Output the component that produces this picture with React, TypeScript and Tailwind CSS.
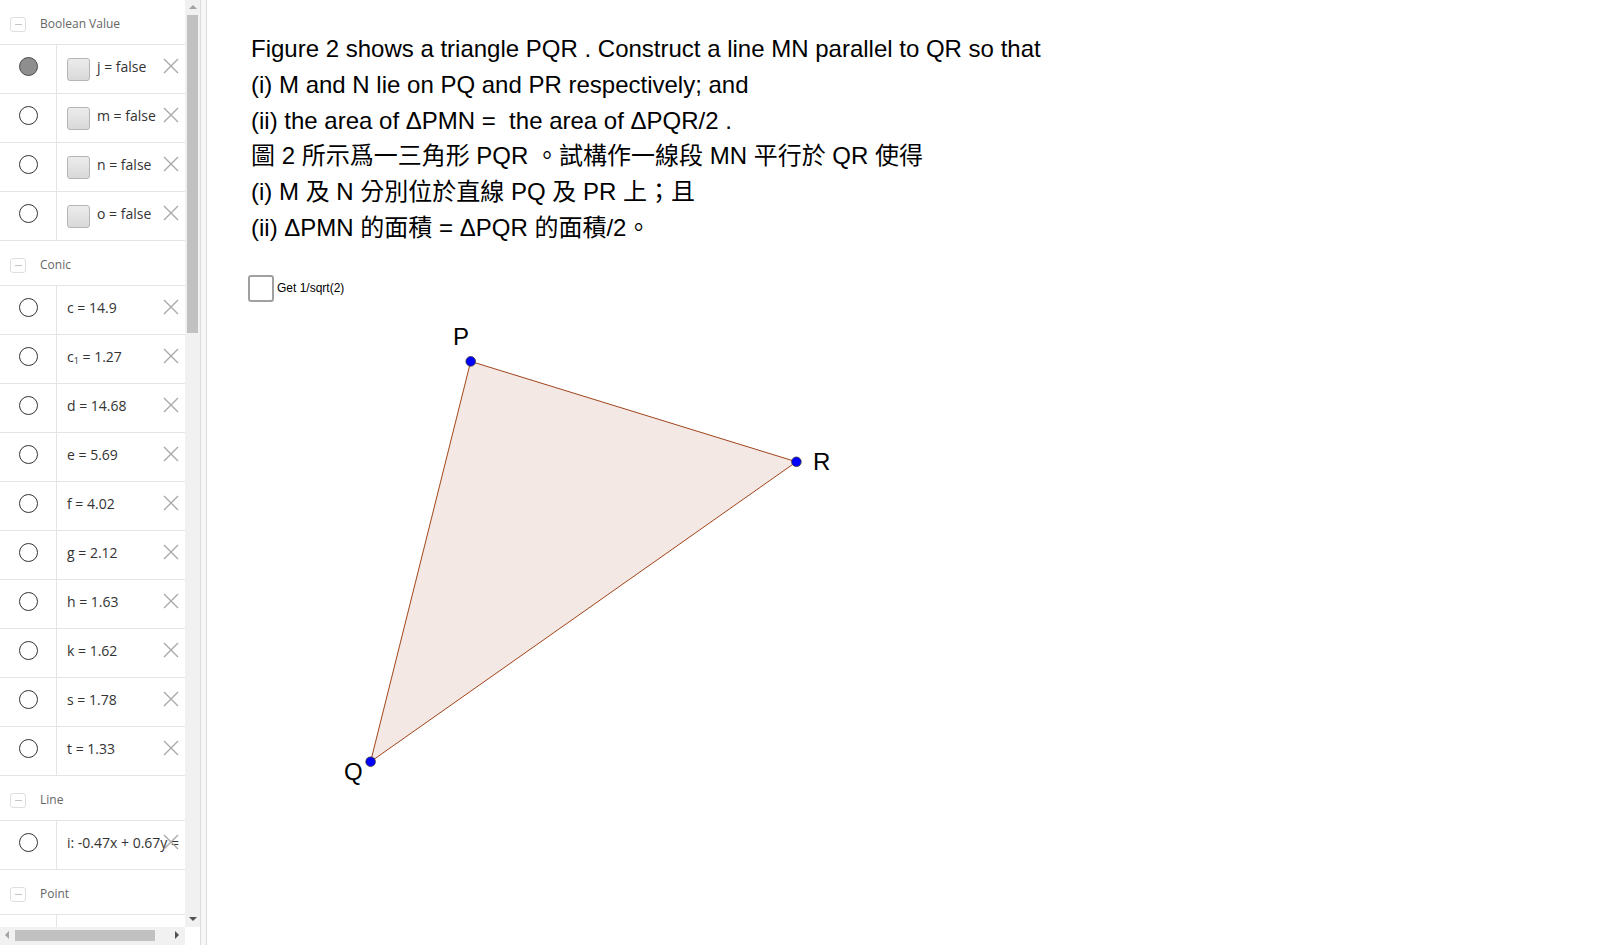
import type { ReactNode } from "react";

type Row = { label: ReactNode; bool?: boolean; filled?: boolean };

const sections: { title: string; rows: Row[] }[] = [
  {
    title: "Boolean Value",
    rows: [
      { label: "j = false", bool: true, filled: true },
      { label: "m = false", bool: true },
      { label: "n = false", bool: true },
      { label: "o = false", bool: true },
    ],
  },
  {
    title: "Conic",
    rows: [
      { label: "c = 14.9" },
      {
        label: (
          <>
            c<sub className="text-[9px]">1</sub> = 1.27
          </>
        ),
      },
      { label: "d = 14.68" },
      { label: "e = 5.69" },
      { label: "f = 4.02" },
      { label: "g = 2.12" },
      { label: "h = 1.63" },
      { label: "k = 1.62" },
      { label: "s = 1.78" },
      { label: "t = 1.33" },
    ],
  },
  { title: "Line", rows: [{ label: "i: -0.47x + 0.67y =" }] },
  { title: "Point", rows: [{ label: "" }] },
];

function DeleteIcon() {
  return (
    <svg width="16" height="16" viewBox="0 0 16 16" className="absolute right-[6px] top-[13px]">
      <path d="M1 1 L15 15 M15 1 L1 15" stroke="#a9a9a9" strokeWidth="1.4" fill="none" />
    </svg>
  );
}

function SectionHeader({ title }: { title: string }) {
  return (
    <div className="flex h-[45px] shrink-0 items-center border-b border-[#e4e4e4] pt-[4px]">
      <div className="ml-[10px] flex h-[15px] w-[16px] items-center justify-center rounded-[3px] border border-[#dedede]">
        <div className="h-px w-[7px] bg-[#c4c4c4]" />
      </div>
      <span className="ml-[14px] text-[12px] text-[#666]">{title}</span>
    </div>
  );
}

function ItemRow({ row }: { row: Row }) {
  return (
    <div className="flex h-[49px] shrink-0 border-b border-[#e4e4e4]">
      <div className="flex w-[57px] shrink-0 items-center justify-center border-r border-[#e4e4e4] pb-[5px]">
        <div className={`h-[19px] w-[19px] rounded-full border ${row.filled ? "border-[#4a4a4a] bg-[#8e8e8e]" : "border-[#333] bg-white"}`} />
      </div>
      <div className="relative flex min-w-0 flex-1 items-center overflow-hidden pb-[5px] pl-[10px]">
        {row.bool && (
          <div className="mr-[7px] mt-[5px] h-[23px] w-[23px] shrink-0 rounded-[3px] border border-[#b5b5b5] bg-gradient-to-b from-[#ececec] to-[#d9d9d9]" />
        )}
        <span className="whitespace-nowrap text-[14px] text-[#333]">{row.label}</span>
        <DeleteIcon />
      </div>
    </div>
  );
}

export default function App() {
  return (
    <div className="flex h-[945px] w-[1600px] overflow-hidden bg-white" style={{ fontFamily: '"Liberation Sans", Arial, sans-serif' }}>
      <div className="flex w-[200px] shrink-0 flex-col" style={{ fontFamily: '"Open Sans", sans-serif' }}>
        <div className="flex h-[927px]">
          <div className="flex w-[185px] flex-col overflow-hidden">
            {sections.map((section) => (
              <div key={section.title} className="flex flex-col">
                <SectionHeader title={section.title} />
                {section.rows.map((row, i) => (
                  <ItemRow key={i} row={row} />
                ))}
              </div>
            ))}
          </div>
          <div className="flex w-[15px] flex-col items-center bg-[#f1f1f1]">
            <div className="mt-[5px] h-0 w-0 border-x-[4px] border-b-[4px] border-x-transparent border-b-[#a3a3a3]" />
            <div className="mt-[6px] h-[318px] w-[11px] bg-[#c1c1c1]" />
            <div className="flex-1" />
            <div className="mb-[6px] h-0 w-0 border-x-[4px] border-t-[4px] border-x-transparent border-t-[#505050]" />
          </div>
        </div>
        <div className="flex h-[18px] w-[185px] items-center bg-[#f1f1f1] pb-[2px]">
          <div className="ml-[5px] h-0 w-0 border-y-[4px] border-r-[4px] border-y-transparent border-r-[#a3a3a3]" />
          <div className="ml-[6px] h-[11px] w-[140px] bg-[#c1c1c1]" />
          <div className="flex-1" />
          <div className="mr-[6px] h-0 w-0 border-y-[4px] border-l-[4px] border-y-transparent border-l-[#505050]" />
        </div>
      </div>

      <div className="w-[7px] shrink-0 border-x border-[#dcdcdc] bg-[#f7f7f7]" />

      <div className="relative flex-1">
        <svg className="pointer-events-none absolute inset-0" width="1393" height="945" viewBox="207 0 1393 945">
          <polygon points="470.7,361.4 796.4,461.8 370.6,761.7" fill="#f3e8e3" stroke="#a0431a" strokeWidth="1" />
          <circle cx="470.7" cy="361.4" r="4.8" fill="#0000ff" stroke="#333" strokeWidth="0.8" />
          <circle cx="796.4" cy="461.8" r="4.8" fill="#0000ff" stroke="#333" strokeWidth="0.8" />
          <circle cx="370.6" cy="761.7" r="4.8" fill="#0000ff" stroke="#333" strokeWidth="0.8" />
          <text x="453" y="345" fontSize="24" fontFamily="Liberation Sans, Arial, sans-serif" fill="#000">P</text>
          <text x="813" y="470" fontSize="24" fontFamily="Liberation Sans, Arial, sans-serif" fill="#000">R</text>
          <text x="344" y="780" fontSize="24" fontFamily="Liberation Sans, Arial, sans-serif" fill="#000">Q</text>
        </svg>

        <div className="relative pl-[44px] pt-[31px]">
          <div
            className="text-[24px] leading-[35.8px] text-black"
            style={{ fontFamily: '"Liberation Sans", Arial, "Noto Sans CJK TC", sans-serif' }}
          >
            <div>Figure 2 shows a triangle PQR . Construct a line MN parallel to QR so that</div>
            <div>(i) M and N lie on PQ and PR respectively; and</div>
            <div>(ii) the area of ΔPMN =&nbsp; the area of ΔPQR/2 .</div>
            <div>圖 2 所示爲一三角形 PQR 。試構作一線段 MN 平行於 QR 使得</div>
            <div>(i) M 及 N 分別位於直線 PQ 及 PR 上；且</div>
            <div>(ii) ΔPMN 的面積 = ΔPQR 的面積/2。</div>
          </div>

          <div className="-ml-[3px] mt-[29px] flex items-center gap-[3px]">
            <div className="h-[27px] w-[26px] rounded-[3px] border-2 border-[#a0a0a0] bg-white" />
            <span className="text-[12px] text-black">Get 1/sqrt(2)</span>
          </div>
        </div>
      </div>
    </div>
  );
}
